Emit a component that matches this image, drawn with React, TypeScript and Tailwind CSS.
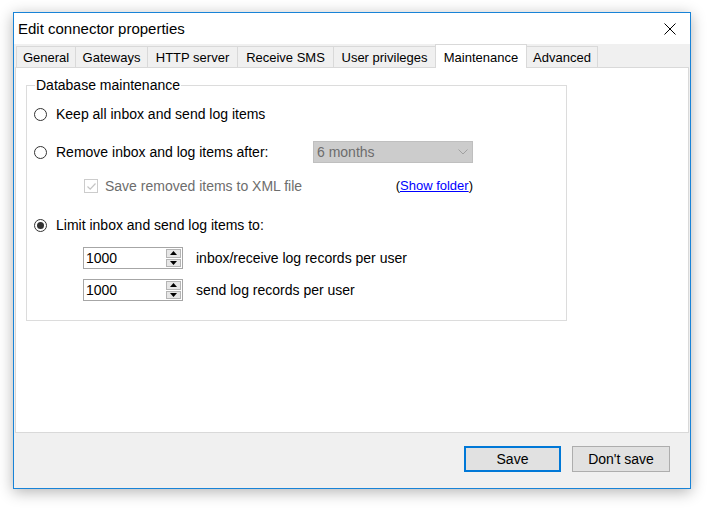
import React from 'react'

const tabs = [
  { label: 'General', w: 'w-[59px]' },
  { label: 'Gateways', w: 'w-[72px]' },
  { label: 'HTTP server', w: 'w-[90px]' },
  { label: 'Receive SMS', w: 'w-[96px]' },
  { label: 'User privileges', w: 'w-[102px]' },
  { label: 'Maintenance', w: 'w-[92px]', active: true },
  { label: 'Advanced', w: 'w-[71px]', last: true },
]

function Radio({ checked }: { checked?: boolean }) {
  return (
    <div className="w-[13px] h-[13px] rounded-full border border-[#333333] bg-white flex items-center justify-center shrink-0">
      {checked && <div className="w-[7px] h-[7px] rounded-full bg-[#333333]" />}
    </div>
  )
}

function Spinner({ value }: { value: string }) {
  return (
    <div className="w-[100px] h-[22px] border border-[#a6a6a6] bg-white flex items-center">
      <span className="flex-1 pl-[2px] text-[14px] leading-none">{value}</span>
      <div className="w-[15px] h-[18px] mr-[1px] flex flex-col gap-[1px]">
        <div className="flex-1 bg-[#e6e6e6] border border-[#b4b4b4] flex items-center justify-center">
          <svg width="7" height="4" viewBox="0 0 7 4">
            <path d="M0 4 L3.5 0 L7 4 Z" fill="#000" />
          </svg>
        </div>
        <div className="flex-1 bg-[#e6e6e6] border border-[#b4b4b4] flex items-center justify-center">
          <svg width="7" height="4" viewBox="0 0 7 4">
            <path d="M0 0 L7 0 L3.5 4 Z" fill="#000" />
          </svg>
        </div>
      </div>
    </div>
  )
}

export default function App() {
  return (
    <div
      className="w-[709px] h-[508px] bg-white pt-[12px] pl-[13px] text-black"
      style={{ fontFamily: '"Liberation Sans", Arial, sans-serif' }}
    >
      <div className="w-[678px] h-[477px] border border-[#1883d7] bg-[#f0f0f0] flex flex-col shadow-[0_3px_14px_rgba(0,0,0,0.3)]">
        {/* Title bar */}
        <div className="h-[31px] bg-white flex items-center justify-between pl-[4px] pr-[14px] shrink-0">
          <span className="text-[15px] pt-[1px]">Edit connector properties</span>
          <svg width="12" height="12" viewBox="0 0 12 12" className="mt-[1px]">
            <path d="M0.5 0.5 L11.5 11.5 M11.5 0.5 L0.5 11.5" stroke="#000" strokeWidth="1" />
          </svg>
        </div>

        {/* Tabs */}
        <div className="h-[23px] flex items-end pl-[2px] shrink-0">
          {tabs.map((t) =>
            t.active ? (
              <div
                key={t.label}
                className={`${t.w} h-[24px] -mb-px relative z-10 bg-white border-l border-t border-r border-[#d9d9d9] flex items-start justify-center pt-[3px] text-[13px]`}
              >
                {t.label}
              </div>
            ) : (
              <div
                key={t.label}
                className={`${t.w} h-[21px] border-t border-[#d9d9d9] ${t.last ? 'border-r' : 'border-l'} flex items-center justify-center text-[13px] pt-[1px]`}
              >
                {t.label}
              </div>
            )
          )}
        </div>

        {/* Panel */}
        <div className="h-[366px] mx-[1px] bg-white border border-[#d9d9d9] shrink-0">
          <div className="relative ml-[10px] mt-[17px] w-[541px] h-[236px] border border-[#dcdcdc]">
            <span className="absolute left-[8px] -top-[9px] bg-white px-[1px] text-[14px] leading-[16px]">
              Database maintenance
            </span>

            <div className="pt-[18px] text-[14px]">
              <div className="h-[20px] flex items-center pl-[7px]">
                <Radio />
                <span className="ml-[9px]">Keep all inbox and send log items</span>
              </div>

              <div className="h-[22px] mt-[17px] flex items-center pl-[7px]">
                <Radio />
                <span className="ml-[9px] w-[257px]">Remove inbox and log items after:</span>
                <div className="w-[160px] h-[22px] bg-[#cccccc] border border-[#bfbfbf] flex items-center justify-between pl-[3px] pr-[4px] text-[#6d6d6d]">
                  <span>6 months</span>
                  <svg width="10" height="6" viewBox="0 0 10 6">
                    <path d="M0.5 0.5 L5 5 L9.5 0.5" stroke="#a0a0a0" strokeWidth="1" fill="none" />
                  </svg>
                </div>
              </div>

              <div className="h-[20px] mt-[13px] flex items-center pl-[57px] pr-[93px]">
                <div className="w-[14px] h-[14px] border border-[#cccccc] bg-white flex items-center justify-center shrink-0">
                  <svg width="11" height="11" viewBox="0 0 11 11">
                    <path d="M1.5 5.5 L4.2 8.2 L9.5 2.5" stroke="#c4c4c4" strokeWidth="1.2" fill="none" />
                  </svg>
                </div>
                <span className="ml-[7px] text-[#6d6d6d]">Save removed items to XML file</span>
                <span className="ml-auto text-[13px]">
                  (<span className="text-[#0000ff] underline">Show folder</span>)
                </span>
              </div>

              <div className="h-[20px] mt-[19px] flex items-center pl-[7px]">
                <Radio checked />
                <span className="ml-[9px]">Limit inbox and send log items to:</span>
              </div>

              <div className="h-[22px] mt-[12px] flex items-center pl-[56px]">
                <Spinner value="1000" />
                <span className="ml-[13px]">inbox/receive log records per user</span>
              </div>

              <div className="h-[22px] mt-[10px] flex items-center pl-[56px]">
                <Spinner value="1000" />
                <span className="ml-[13px]">send log records per user</span>
              </div>
            </div>
          </div>
        </div>

        {/* Buttons */}
        <div className="flex justify-end gap-[11px] pr-[20px] pt-[13px] text-[14px]">
          <button className="w-[97px] h-[26px] bg-[#e1e1e1] border-2 border-[#0078d7] flex items-center justify-center">
            Save
          </button>
          <button className="w-[98px] h-[26px] bg-[#e1e1e1] border border-[#adadad] flex items-center justify-center">
            Don't save
          </button>
        </div>
      </div>
    </div>
  )
}
